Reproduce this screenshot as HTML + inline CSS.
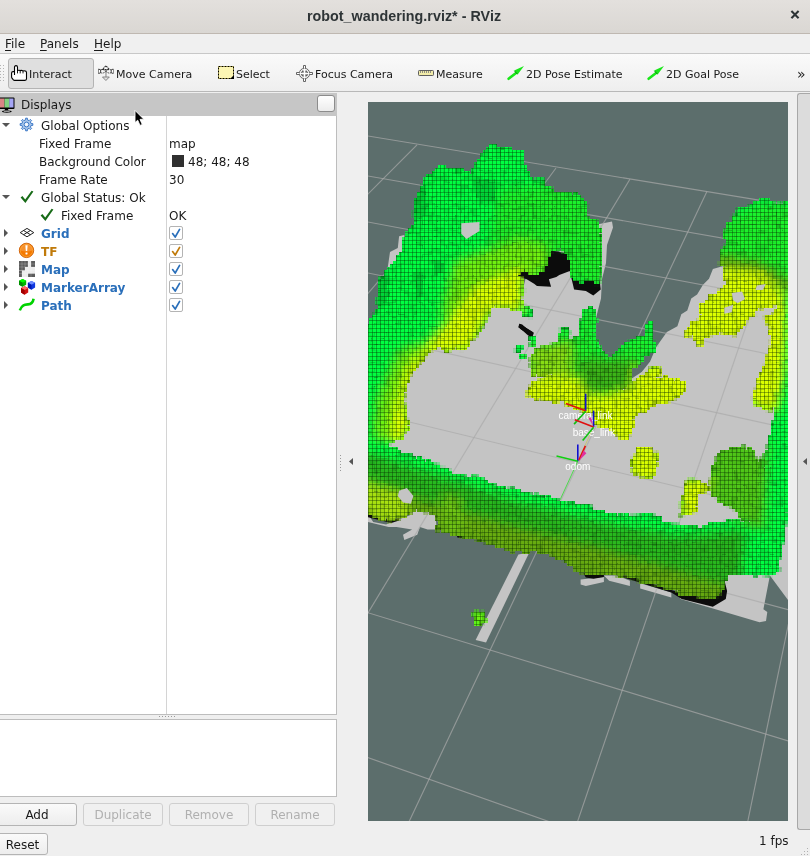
<!DOCTYPE html>
<html>
<head>
<meta charset="utf-8">
<title>robot_wandering.rviz* - RViz</title>
<style>
html,body{margin:0;padding:0;}
body{width:810px;height:856px;overflow:hidden;background:#efefef;font-family:"DejaVu Sans","Liberation Sans",sans-serif;font-size:12px;color:#1a1a1a;position:relative;}
.abs{position:absolute;will-change:transform;}
#titlebar{left:0;top:0;width:810px;height:33px;background:linear-gradient(#e3e0dd,#dad7d3);border-bottom:1px solid #bfb8b1;}
#title{left:0;top:0;width:808px;height:33px;line-height:32px;text-align:center;font-family:"Liberation Sans","DejaVu Sans",sans-serif;font-weight:bold;font-size:14.3px;color:#2e3436;letter-spacing:0.03px;}
#close{left:788px;top:6px;width:16px;height:20px;font-size:15px;line-height:20px;color:#2e3436;font-weight:bold;}
#menubar{left:0;top:34px;width:810px;height:19px;background:#f0f0f0;border-bottom:1px solid #c8c8c8;}
.menu{top:34px;height:20px;line-height:20px;font-size:12px;color:#1a1a1a;}
.menu u{text-decoration:underline;text-underline-offset:2px;}
#toolbar{left:0;top:54px;width:810px;height:37px;background:linear-gradient(#fafafa,#eeeeee);border-bottom:1px solid #b8b8b8;}
.tb{top:56px;height:37px;line-height:37px;font-size:11px;color:#1a1a1a;white-space:nowrap;}
#tb-active{left:8px;top:58px;width:86px;height:31px;border:1px solid #b4b4b4;border-radius:3px;background:#dfdfdf;box-sizing:border-box;}
#disp-head{left:0;top:93px;width:337px;height:23px;background:#c6c6c6;}
#disp-title{left:21px;top:95px;height:21px;line-height:21px;font-size:12px;}
#disp-btn{left:317px;top:95px;width:18px;height:17px;box-sizing:border-box;border:1px solid #8c8c8c;border-radius:3px;background:linear-gradient(#ffffff,#ececec);}
#tree{left:0;top:116px;width:336px;height:598px;background:#fff;border-right:1px solid #bdbdbd;border-bottom:1px solid #bdbdbd;}
#tree-div{left:166px;top:116px;width:1px;height:598px;background:#d4d4d4;}
.row{left:0;width:336px;height:18px;line-height:18px;font-size:12px;white-space:nowrap;}
.row span{position:absolute;top:1px;}
.b{font-weight:bold;}
.blue{color:#2a6fba;}
.org{color:#c07a0a;}
.cb{position:absolute;left:169px;top:2px;width:12px;height:12px;border:1px solid #b4b4b4;background:#fff;border-radius:2px;}
#desc{left:0;top:719px;width:337px;height:78px;background:#fff;border:1px solid #bdbdbd;border-left:none;box-sizing:border-box;}
.btn{top:803px;height:23px;box-sizing:border-box;border:1px solid #b4b4b4;border-radius:3px;background:linear-gradient(#fafafa,#ededed);text-align:center;line-height:23px;font-size:12px;color:#1a1a1a;}
.btn.dis{color:#b0b0b0;border-color:#cfcfcf;background:#f0f0f0;}
#view{left:368px;top:102px;width:420px;height:719px;background:#5c6e6c;overflow:hidden;}
#rpanel{left:797px;top:93px;width:14px;height:737px;background:#dcdcdc;border:1px solid #a8a8a8;border-right:none;border-radius:3px 0 0 3px;box-sizing:border-box;}
</style>
</head>
<body>
<div class="abs" id="titlebar"></div>
<div class="abs" id="title">robot_wandering.rviz* - RViz</div>


<div class="abs" id="menubar"></div>
<div class="abs menu" style="left:5px"><u>F</u>ile</div>
<div class="abs menu" style="left:40px"><u>P</u>anels</div>
<div class="abs menu" style="left:94px"><u>H</u>elp</div>

<div class="abs" id="toolbar"></div>
<div class="abs" id="tb-active"></div>
<div class="abs tb" style="left:29px">Interact</div>
<div class="abs tb" style="left:116px">Move Camera</div>
<div class="abs tb" style="left:236px">Select</div>
<div class="abs tb" style="left:315px">Focus Camera</div>
<div class="abs tb" style="left:436px">Measure</div>
<div class="abs tb" style="left:526px">2D Pose Estimate</div>
<div class="abs tb" style="left:666px">2D Goal Pose</div>
<div class="abs tb" style="left:797px;font-size:14px">»</div>

<div class="abs" id="disp-head"></div>
<div class="abs" id="disp-title">Displays</div>
<div class="abs" id="disp-btn"></div>

<div class="abs" id="tree"></div>
<div class="abs" id="tree-div"></div>

<div class="abs row" style="top:116px"><span style="left:41px">Global Options</span></div>
<div class="abs row" style="top:134px"><span style="left:39px">Fixed Frame</span><span style="left:169px">map</span></div>
<div class="abs row" style="top:152px"><span style="left:39px">Background Color</span><span style="left:172px;top:3px;width:12px;height:12px;background:#303030"></span><span style="left:188px">48; 48; 48</span></div>
<div class="abs row" style="top:170px"><span style="left:39px">Frame Rate</span><span style="left:169px">30</span></div>
<div class="abs row" style="top:188px"><span style="left:41px">Global Status: Ok</span></div>
<div class="abs row" style="top:206px"><span style="left:61px">Fixed Frame</span><span style="left:169px">OK</span></div>
<div class="abs row" style="top:224px"><span class="b blue" style="left:41px">Grid</span><div class="cb"></div></div>
<div class="abs row" style="top:242px"><span class="b org" style="left:41px">TF</span><div class="cb"></div></div>
<div class="abs row" style="top:260px"><span class="b blue" style="left:41px">Map</span><div class="cb"></div></div>
<div class="abs row" style="top:278px"><span class="b blue" style="left:41px">MarkerArray</span><div class="cb"></div></div>
<div class="abs row" style="top:296px"><span class="b blue" style="left:41px">Path</span><div class="cb"></div></div>

<div class="abs" id="desc"></div>
<div class="abs btn" style="left:-3px;width:80px">Add</div>
<div class="abs btn dis" style="left:83px;width:80px">Duplicate</div>
<div class="abs btn dis" style="left:169px;width:80px">Remove</div>
<div class="abs btn dis" style="left:255px;width:80px">Rename</div>
<div class="abs btn" style="left:-3px;top:833px;width:51px;height:22px;line-height:22px">Reset</div>
<div class="abs" style="left:759px;top:832px;height:18px;line-height:18px;font-size:12px">1 fps</div>

<div class="abs" id="view"><!--SCENE--><svg width="420" height="719" viewBox="368 102 420 719" style="position:absolute;left:0;top:0;display:block">
<defs>
<clipPath id="wc"><polygon points="358.0,432.0 358.0,322.0 368.0,324.4 378.4,308.9 378.4,280.4 388.7,270.0 401.7,251.9 404.3,238.9 414.7,223.3 414.7,205.2 423.7,181.9 438.0,167.6 463.9,170.2 471.7,176.1 471.7,172.8 482.1,155.9 489.9,146.1 513.2,149.4 522.3,153.3 523.6,163.7 533.9,181.9 540.4,178.0 546.9,185.7 554.7,192.2 578.0,194.8 583.3,199.8 587.3,207.7 585.3,217.5 596.1,221.5 600.1,229.4 600.7,257.0 599.3,283.7 588.9,279.3 584.4,279.3 580.0,282.2 574.1,276.3 571.1,270.4 569.6,255.6 559.3,248.1 550.4,251.9 544.4,267.4 537.0,274.8 529.6,271.9 525.2,268.9 517.8,274.8 522.2,279.3 523.7,289.6 520.7,300.0 519.3,308.9 492.4,306.3 489.9,312.0 482.1,327.6 471.7,340.5 461.3,350.9 453.6,347.0 445.8,353.5 440.6,345.7 428.9,350.9 423.7,360.0 417.3,363.9 406.9,384.6 403.0,397.6 406.9,415.7 408.2,428.7 399.1,439.0 383.6,441.6 373.2,433.9 368.0,428.7"/><polygon points="358.0,420.0 372.0,428.0 394.0,441.0 384.0,448.0 358.0,440.0"/><polygon points="358.0,512.0 358.0,436.0 368.0,438.9 383.6,444.1 401.7,451.9 412.1,455.7 425.0,460.9 445.8,468.7 453.6,475.2 476.9,477.8 482.1,479.1 489.9,484.3 513.2,489.4 533.9,494.6 554.7,499.8 578.0,505.0 591.0,505.6 593.6,510.7 611.7,514.6 629.9,515.9 650.6,514.6 661.0,518.5 663.6,523.7 681.7,525.0 702.4,527.6 712.8,523.7 733.6,521.1 754.3,522.4 759.5,510.7 763.4,484.8 767.3,458.9 771.1,435.6 775.0,420.0 795.8,420.0 795.8,495.2 788.0,497.8 785.4,523.7 781.5,549.6 777.6,567.8 780.2,570.4 772.4,573.0 769.9,575.6 728.4,573.0 723.2,585.9 719.3,593.7 712.8,598.9 697.3,596.3 681.7,593.7 673.9,589.8 658.4,585.9 632.4,578.1 629.9,575.6 616.9,575.6 603.9,573.0 585.8,574.3 578.0,570.4 567.6,563.3 554.7,555.6 533.9,550.4 528.7,553.0 502.8,547.8 479.5,540.0 458.7,536.1 438.0,529.6 436.7,514.1 413.4,508.9 409.5,514.1 399.1,518.0 391.3,520.6 368.0,514.1"/><polygon points="724.8,231.4 730.7,221.5 738.6,209.6 746.5,207.7 756.4,201.7 768.2,199.8 774.2,204.7 782.1,202.7 793.9,203.7 796.0,505.0 788.0,505.0 780.0,522.0 764.3,490.0 766.3,452.5 772.2,428.8 776.1,409.0 774.2,405.1 770.2,411.0 766.3,409.0 756.4,405.1 752.4,399.1 762.8,370.0 768.7,350.7 771.7,338.9 770.2,327.0 764.3,319.6 771.7,315.2 777.6,309.3 777.6,303.3 771.7,306.3 764.3,307.8 756.9,309.3 753.9,313.7 746.5,315.2 743.6,321.1 740.6,328.5 736.1,335.9 724.3,331.5 712.4,328.5 703.6,333.0 702.1,344.8 697.6,344.8 697.6,334.4 687.3,335.9 685.8,331.5 690.2,327.0 690.2,322.6 697.6,321.1 705.0,315.2 699.1,313.7 699.1,309.3 705.0,301.9 712.4,294.4 716.9,293.0 727.3,284.1 724.3,276.7 724.3,264.8 718.4,264.8 721.3,254.4 726.8,245.2"/><polygon points="712.8,469.3 718.0,453.7 728.4,449.8 743.9,445.9 743.9,453.7 749.1,448.5 754.3,449.8 754.3,456.3 759.5,461.5 764.7,453.7 766.0,497.8 759.5,523.7 743.9,519.8 733.6,508.1 723.2,503.0 712.8,495.2 710.2,482.2"/><polygon points="686.9,480.9 692.1,478.3 702.4,483.5 710.2,488.7 697.3,493.9 694.7,512.0 681.7,515.9 680.4,504.3 684.3,493.9"/><polygon points="632.4,458.9 641.5,455.0 641.5,447.2 649.3,448.5 649.3,455.0 655.8,458.9 655.8,468.0 650.6,478.3 632.4,473.1"/><polygon points="528.4,390.7 535.7,380.2 547.3,378.1 555.7,371.9 572.5,371.9 585.1,378.1 589.3,394.9 604.0,392.8 624.9,390.7 633.3,382.3 645.9,374.0 651.2,367.7 660.6,367.7 660.6,374.0 654.3,378.1 664.8,378.1 684.8,382.3 684.8,390.7 675.3,399.1 664.8,403.3 654.3,404.4 641.7,411.7 633.3,415.9 633.3,426.4 627.0,439.0 620.7,436.9 610.2,428.5 594.5,424.3 593.5,411.7 585.1,410.7 565.1,404.4 565.1,399.1 554.6,401.2 536.8,399.1 528.4,396.0"/><polygon points="531.5,359.3 536.8,348.8 545.2,346.7 559.9,342.5 559.9,329.9 567.2,327.8 569.3,338.3 579.8,337.2 579.8,323.6 583.0,319.4 583.0,311.0 589.3,307.8 595.6,311.0 596.6,321.5 593.5,332.0 595.6,340.4 604.0,353.0 610.2,357.2 618.6,350.9 627.0,342.5 633.3,340.4 639.6,336.2 645.9,338.3 647.0,323.6 651.2,322.5 653.3,332.0 651.2,342.5 655.4,343.5 654.3,350.9 643.8,355.1 637.5,363.5 631.2,367.7 631.2,382.3 624.9,388.6 612.3,392.8 599.8,394.9 587.2,392.8 583.0,382.3 572.5,374.0 562.0,371.9 551.5,374.0 543.1,376.0 532.6,374.0 530.5,365.6"/><polygon points="520.0,302.6 530.5,308.9 531.5,315.2 524.2,313.1 520.0,308.9"/><polygon points="530.5,339.3 535.7,340.4 534.7,344.6 530.5,344.1"/><polygon points="637.5,447.4 645.9,446.4 654.3,451.6 658.5,460.0 634.4,460.0"/><polygon points="685.6,331.4 692.1,322.4 702.4,317.2 723.2,312.0 759.5,312.0 749.1,317.2 743.9,325.0 733.6,335.3 718.0,332.7 702.4,337.9 699.9,345.7 692.1,335.3"/><polygon points="515.8,347.0 521.0,348.3 521.0,352.2 515.8,350.9"/><polygon points="519.7,353.5 524.9,354.8 524.9,358.7 519.7,358.1"/><polygon points="530.0,337.9 535.2,339.2 535.2,344.4 530.0,343.1"/><polygon points="522.3,309.4 532.6,309.4 531.3,317.2 523.6,315.9"/><polygon points="474.3,612.7 484.7,611.4 484.7,623.1 474.3,624.4"/></clipPath>
<filter id="bl" color-interpolation-filters="sRGB" filterUnits="userSpaceOnUse" x="300" y="40" width="560" height="860"><feGaussianBlur stdDeviation="5"/></filter>
<pattern id="vx" width="3.6" height="3.6" patternUnits="userSpaceOnUse" patternTransform="rotate(24) skewX(-12)"><path d="M0 0.4H3.6M0.4 0V3.6" stroke="#0a3000" stroke-opacity="0.22" stroke-width="0.8"/><rect x="0" y="0" width="1.5" height="1.3" fill="#062400" fill-opacity="0.62"/></pattern>
<filter id="rg" color-interpolation-filters="sRGB" filterUnits="userSpaceOnUse" x="360" y="95" width="440" height="735"><feTurbulence type="fractalNoise" baseFrequency="0.2" numOctaves="1" seed="7" result="t"/><feDisplacementMap in="SourceGraphic" in2="t" scale="6" xChannelSelector="R" yChannelSelector="G"/></filter>
<filter id="px" filterUnits="userSpaceOnUse" x="360" y="96" width="440" height="732" color-interpolation-filters="sRGB"><feFlood x="361.3" y="97.3" height="1.4" width="1.4"/><feComposite width="4" height="4"/><feTile result="a"/><feComposite in="SourceGraphic" in2="a" operator="in"/><feMorphology operator="dilate" radius="2" result="pix"/><feFlood flood-color="#042800" flood-opacity="0.2" x="360" y="96" width="4" height="1"/><feComposite width="4" height="4"/><feTile result="gh"/><feFlood flood-color="#042800" flood-opacity="0.2" x="360" y="96" width="1" height="4"/><feComposite width="4" height="4"/><feTile result="gv"/><feComposite in="gh" in2="pix" operator="atop" result="p1"/><feComposite in="gv" in2="p1" operator="atop"/></filter>
<filter id="nz" filterUnits="userSpaceOnUse" x="360" y="96" width="440" height="732" color-interpolation-filters="sRGB"><feTurbulence type="fractalNoise" baseFrequency="0.43" numOctaves="1" seed="11"/><feColorMatrix type="matrix" values="0 0 0 0 0  0 0 0 0 0.16  0 0 0 0 0  1.1 0 0 0 -0.46"/></filter>
</defs>
<rect x="368" y="102" width="420" height="719" fill="#5c6e6c"/>
<polygon points="492.0,306.0 518.0,309.0 528.0,269.0 567.5,247.0 597.0,224.4 612.0,221.5 613.0,227.4 607.0,245.0 606.0,263.0 602.0,279.0 601.0,298.5 596.0,318.0 594.5,336.2 604.0,353.0 629.1,380.2 641.7,371.9 650.1,361.4 656.4,346.7 666.9,332.0 677.4,326.2 681.3,314.3 687.3,310.4 691.2,298.5 697.1,294.6 703.0,284.7 709.0,278.8 712.9,268.9 726.8,265.0 788.0,280.0 788.0,600.0 769.9,575.6 763.4,609.3 767.3,611.9 766.0,620.9 759.5,622.2 680.4,598.9 676.0,588.0 578.0,558.0 368.0,503.0 368.0,428.0 395.0,430.0 398.0,398.0 412.0,362.0 425.0,344.0 458.0,342.0 485.0,304.0" fill="#c4c4c4"/>
<polygon points="368.0,514.1 373.2,521.9 386.1,524.4 391.3,521.9 399.1,519.3 409.5,515.4 413.4,510.2 435.4,514.1 436.7,529.6 427.6,529.6 419.9,527.0 417.3,534.8 404.3,540.0 403.0,534.8 412.1,529.6 396.5,527.0 388.7,527.0 368.0,521.9" fill="#c4c4c4"/>
<polygon points="518.4,554.4 529.3,552.6 486.0,642.6 475.6,640.0" fill="#c4c4c4"/>
<polygon points="580.6,579.4 603.9,576.9 603.9,582.0 585.8,585.9 580.6,584.6" fill="#c4c4c4"/>
<polygon points="603.9,575.6 616.9,575.6 629.9,580.7 629.9,585.9 609.1,580.7" fill="#c4c4c4"/>
<polygon points="640.2,583.3 671.3,592.4 671.3,597.6 640.2,588.5" fill="#c4c4c4"/>
<polygon points="387.4,270.0 390.0,251.9 397.8,248.0 399.1,236.3 404.3,235.0 404.3,244.1 401.7,254.4 393.9,264.8" fill="#c4c4c4"/>
<polygon points="461.3,223.3 479.5,222.0 479.5,231.1 466.5,238.9 461.3,233.7" fill="#c4c4c4"/>
<g stroke="#a9aaaa" stroke-opacity="0.7" stroke-width="1.15" fill="none">
<line x1="360.0" y1="134.7" x2="800.0" y2="206.9"/>
<line x1="360.0" y1="174.6" x2="800.0" y2="251.7"/>
<line x1="360.0" y1="220.5" x2="800.0" y2="303.2"/>
<line x1="360.0" y1="271.4" x2="800.0" y2="360.4"/>
<line x1="360.0" y1="334.2" x2="800.0" y2="431.0"/>
<line x1="360.0" y1="410.1" x2="800.0" y2="516.2"/>
<line x1="360.0" y1="494.9" x2="800.0" y2="612.8"/>
<line x1="360.0" y1="610.3" x2="800.0" y2="744.5"/>
<line x1="360.0" y1="754.7" x2="800.0" y2="910.4"/>
<line x1="360.0" y1="936.8" x2="800.0" y2="1112.8"/>
<line x1="349.0" y1="133.0" x2="-441.3" y2="830.0"/>
<line x1="417.0" y1="144.8" x2="-266.1" y2="830.0"/>
<line x1="487.0" y1="155.5" x2="-95.6" y2="830.0"/>
<line x1="556.0" y1="168.0" x2="69.7" y2="830.0"/>
<line x1="629.9" y1="179.3" x2="236.9" y2="830.0"/>
<line x1="706.9" y1="191.4" x2="405.1" y2="830.0"/>
<line x1="787.6" y1="204.0" x2="574.7" y2="830.0"/>
<line x1="793.4" y1="600.0" x2="746.0" y2="830.0"/>
</g>
<polygon points="517.8,276.3 525.2,267.4 550.4,250.4 571.1,254.1 571.1,270.4 559.3,275.1 556.3,277.0 548.9,279.3 551.1,286.7 537.0,285.9 534.1,283.7 526.7,279.3" fill="#0c0c0c"/>
<polygon points="569.6,270.4 599.3,276.3 600.7,289.6 593.3,295.6 585.9,291.1 574.1,289.6" fill="#0c0c0c"/>
<polygon points="519.3,323.7 522.2,324.4 532.6,334.1 531.9,337.0 528.1,335.6 518.5,326.7" fill="#0c0c0c"/>
<polygon points="520.0,324.6 532.6,332.0 531.5,336.2 520.0,328.8" fill="#0c0c0c"/>
<polygon points="519.7,323.7 533.9,332.7 532.6,336.6 518.4,327.6" fill="#0c0c0c"/>
<polygon points="368.0,514.1 391.3,520.6 399.1,518.0 399.1,520.6 391.3,523.1 368.0,517.2" fill="#0c0c0c"/>
<polygon points="583.2,573.0 603.9,573.0 603.9,576.9 593.6,578.7 585.8,577.6" fill="#0c0c0c"/>
<polygon points="616.9,575.6 629.9,575.6 658.4,585.9 681.7,593.2 712.8,598.9 719.3,593.7 723.2,575.6 727.1,591.1 725.8,598.9 712.8,606.7 681.7,598.9 671.3,592.4 632.4,580.2" fill="#0c0c0c"/>
<polygon points="456.1,533.5 462.6,534.8 461.9,537.9 457.4,537.4" fill="#0c0c0c"/>
<g filter="url(#px)">
<g filter="url(#rg)">
<g clip-path="url(#wc)">
<g filter="url(#bl)">
<polygon points="300.0,40.0 860.0,40.0 860.0,900.0 300.0,900.0" fill="#00ff42"/>
<polygon points="500.0,190.0 560.0,185.0 610.0,215.0 610.0,290.0 560.0,275.0 520.0,270.0 490.0,240.0" fill="#1cf02a"/>
<polygon points="455.0,262.0 520.0,238.0 548.0,246.0 548.0,268.0 515.0,290.0 470.0,300.0 440.0,320.0" fill="#70f010"/>
<polygon points="476.0,286.0 522.0,266.0 524.0,312.0 492.0,310.0 470.0,352.0 436.0,354.0 430.0,340.0 454.0,312.0" fill="#dcff00"/>
<polygon points="430.0,340.0 436.0,354.0 406.0,398.0 412.0,430.0 398.0,444.0 389.0,440.0 395.0,400.0 406.0,368.0" fill="#dcff00"/>
<polygon points="398.0,352.0 426.0,340.0 406.0,368.0 395.0,400.0 389.0,440.0 373.0,438.0 377.0,400.0" fill="#70f010"/>
<polygon points="360.0,450.0 520.0,502.0 600.0,522.0 680.0,536.0 745.0,530.0 740.0,600.0 680.0,600.0 600.0,580.0 520.0,560.0 360.0,522.0" fill="#28b81e"/>
<polygon points="360.0,482.0 520.0,528.0 600.0,548.0 680.0,572.0 735.0,588.0 730.0,615.0 600.0,590.0 520.0,565.0 360.0,528.0" fill="#68ac10"/>
<polygon points="360.0,480.0 405.0,492.0 412.0,522.0 360.0,522.0" fill="#a8e010"/>
<polygon points="442.0,492.0 462.0,498.0 462.0,536.0 442.0,530.0" fill="#70c414"/>
<polygon points="715.0,225.0 760.0,205.0 800.0,205.0 800.0,290.0 760.0,268.0 715.0,258.0" fill="#1cf02a"/>
<polygon points="715.0,254.0 760.0,262.0 800.0,286.0 800.0,300.0 760.0,276.0 715.0,266.0" fill="#68ac10"/>
<polygon points="680.0,264.0 760.0,272.0 786.0,296.0 786.0,345.0 783.0,380.0 777.0,409.0 770.0,416.0 750.0,404.0 735.0,375.0 680.0,350.0" fill="#dcff00"/>
<polygon points="787.0,292.0 795.0,292.0 795.0,530.0 762.0,530.0 765.0,470.0 768.0,452.0 774.0,429.0 778.0,409.0 784.0,380.0 787.0,345.0" fill="#00ff42"/>
<polygon points="706.0,440.0 768.0,440.0 764.0,530.0 706.0,508.0" fill="#50c818"/>
<polygon points="680.0,478.0 712.0,478.0 705.0,520.0 680.0,520.0" fill="#dcff00"/>
<polygon points="628.0,446.0 662.0,446.0 662.0,482.0 628.0,482.0" fill="#dcff00"/>
<polygon points="515.8,374.0 696.3,361.4 696.3,449.5 515.8,449.5" fill="#dcff00"/>
<polygon points="528.4,390.7 535.7,380.2 547.3,378.1 555.7,371.9 572.5,371.9 585.1,378.1 589.3,394.9 604.0,392.8 624.9,390.7 633.3,382.3 645.9,374.0 651.2,367.7 660.6,367.7 660.6,374.0 654.3,378.1 664.8,378.1 684.8,382.3 684.8,390.7 675.3,399.1 664.8,403.3 654.3,404.4 641.7,411.7 633.3,415.9 633.3,426.4 627.0,439.0 620.7,436.9 610.2,428.5 594.5,424.3 593.5,411.7 585.1,410.7 565.1,404.4 565.1,399.1 554.6,401.2 536.8,399.1 528.4,396.0" fill="#dcff00"/>
<polygon points="531.5,359.3 536.8,348.8 545.2,346.7 559.9,342.5 559.9,329.9 567.2,327.8 569.3,338.3 579.8,337.2 579.8,323.6 583.0,319.4 583.0,311.0 589.3,307.8 595.6,311.0 596.6,321.5 593.5,332.0 595.6,340.4 604.0,353.0 610.2,357.2 618.6,350.9 627.0,342.5 633.3,340.4 639.6,336.2 645.9,338.3 647.0,323.6 651.2,322.5 653.3,332.0 651.2,342.5 655.4,343.5 654.3,350.9 643.8,355.1 637.5,363.5 631.2,367.7 631.2,382.3 624.9,388.6 612.3,392.8 599.8,394.9 587.2,392.8 583.0,382.3 572.5,374.0 562.0,371.9 551.5,374.0 543.1,376.0 532.6,374.0 530.5,365.6" fill="#1cf02a"/>
<polygon points="528.4,346.7 572.5,340.4 572.5,376.0 528.4,378.1" fill="#88dc14"/>
<polygon points="574.6,359.3 633.3,359.3 631.2,388.6 585.1,392.8" fill="#3cb418"/>
<polygon points="675.0,305.0 760.0,305.0 745.0,350.0 675.0,350.0" fill="#dcff00"/>
<polygon points="470.0,608.0 490.0,608.0 490.0,630.0 470.0,630.0" fill="#70f010"/>
</g>
<polygon points="471.7,176.1 496.3,179.3 496.3,203.9 475.6,201.3" fill="#003c10" fill-opacity="0.22"/>
<polygon points="414.7,205.2 423.7,181.9 427.1,183.1 427.1,215.6 416.0,223.3" fill="#003c10" fill-opacity="0.22"/>
<polygon points="378.4,280.4 388.7,271.3 390.0,295.9 379.7,308.9" fill="#003c10" fill-opacity="0.22"/>
<polygon points="413.4,271.3 423.7,270.0 423.7,298.5 414.7,299.8" fill="#003c10" fill-opacity="0.22"/>
<polygon points="432.8,259.6 443.2,258.3 443.2,275.2 434.1,277.8" fill="#003c10" fill-opacity="0.22"/>
<rect x="360" y="96" width="440" height="732" filter="url(#nz)"/>
</g>
</g>
</g>
<polygon points="399.1,490.7 406.9,488.1 413.4,495.9 410.8,503.7 403.0,502.4 397.8,495.9" fill="#c4c4c4"/>
<polygon points="461.3,223.3 479.5,222.0 479.5,231.1 466.5,238.9 461.3,233.7" fill="#c4c4c4"/>
<polygon points="731.7,293.0 742.1,291.5 745.0,298.9 737.6,303.3 733.2,300.4" fill="#c4c4c4"/>
<polygon points="724.3,307.8 733.2,304.8 731.7,312.2 724.3,313.7" fill="#c4c4c4"/>
<polygon points="756.9,285.6 765.8,284.1 762.8,290.0 755.4,290.0" fill="#c4c4c4"/>
<line x1="577.8" y1="461.2" x2="560.0" y2="500.0" stroke="#30e030" stroke-width="0.8"/>
<line x1="585.7" y1="411.0" x2="593.6" y2="426.9" stroke="#c8c840" stroke-width="0.6"/>
<line x1="593.6" y1="426.9" x2="577.8" y2="461.2" stroke="#c8c840" stroke-width="0.6"/>
<g font-family="Liberation Sans, Arial, sans-serif" font-size="10" fill="#ffffff" text-anchor="middle">
<text x="585.5" y="419">camera_link</text><text x="593.8" y="435.5">base_link</text><text x="577.8" y="469.5">odom</text>
</g>
<line x1="585.7" y1="393.6" x2="585.7" y2="411.0" stroke="#1010d0" stroke-width="1.6"/>
<line x1="566.0" y1="403.4" x2="585.7" y2="410.7" stroke="#e01010" stroke-width="1.6"/>
<line x1="585.7" y1="411.2" x2="574.1" y2="424.1" stroke="#10c010" stroke-width="1.6"/>
<line x1="593.6" y1="410.6" x2="593.6" y2="426.9" stroke="#1010d0" stroke-width="1.6"/>
<line x1="574.8" y1="419.7" x2="593.6" y2="426.9" stroke="#e01010" stroke-width="1.6"/>
<line x1="593.6" y1="427.3" x2="582.7" y2="440.4" stroke="#10c010" stroke-width="1.6"/>
<line x1="577.8" y1="444.5" x2="577.8" y2="461.2" stroke="#1010d0" stroke-width="1.6"/>
<line x1="556.5" y1="456.0" x2="577.8" y2="461.2" stroke="#10d010" stroke-width="1.6"/>
<line x1="585.4" y1="445.9" x2="578.9" y2="460.1" stroke="#e01010" stroke-width="1.6"/>
<polygon points="583.6,450.6 586.4,453.3 579.2,460.4" fill="#e030a0"/>
<polygon points="588.4,418.0 591.1,417.3 593.1,425.5" fill="#e030a0"/>
</svg><!--/SCENE--></div>
<div class="abs" id="rpanel"></div>
<!--ICONS--><svg width="810" height="856" viewBox="0 0 810 856" style="position:absolute;left:0;top:0;pointer-events:none">
<!-- close x --><path d="M791.4 11.9L798.6 19.1M798.6 11.9L791.4 19.1" stroke="#ffffff" stroke-opacity="0.7" stroke-width="2"/><path d="M791.4 11.1L798.6 18.3M798.6 11.1L791.4 18.3" stroke="#2e3436" stroke-width="2.1"/>
<!-- toolbar grip -->
<g fill="#b4b4b4"><rect x="0" y="65" width="1" height="1"/><rect x="3" y="65" width="1" height="1"/><rect x="0" y="68" width="1" height="1"/><rect x="3" y="68" width="1" height="1"/><rect x="0" y="71" width="1" height="1"/><rect x="3" y="71" width="1" height="1"/><rect x="0" y="74" width="1" height="1"/><rect x="3" y="74" width="1" height="1"/><rect x="0" y="77" width="1" height="1"/><rect x="3" y="77" width="1" height="1"/><rect x="0" y="80" width="1" height="1"/><rect x="3" y="80" width="1" height="1"/></g>
<!-- hand -->
<g transform="translate(11,65)"><path d="M3.5 10V2.3Q3.5 0.6 5 0.6Q6.5 0.6 6.5 2.3V5.6Q7.8 4.9 9.2 5.6Q10.6 5 12 5.9Q13.6 5.4 15 6.3Q15.5 6.8 15.5 7.8V13.8Q15.5 15.4 14 15.4H3.6Q2.8 15.4 2.2 14.7L1 13.2Q0.6 12.6 0.6 11.8V8Q0.6 6.6 2 6.6H3.5" fill="#fff" stroke="#000" stroke-width="1.1" stroke-linejoin="round"/><path d="M6.5 5.6V8.4M9.2 5.8V8.4M12 6V8.4" stroke="#000" stroke-width="0.9" fill="none"/></g>
<!-- move camera -->
<g transform="translate(98,65)" fill="none"><rect x="7" y="4.4" width="1.9" height="7.8" fill="#b8b8b8"/><path d="M7.9 0.8L4.5 4.4H11.3Z" fill="#fdfdfd" stroke="#333" stroke-width="1.05" stroke-dasharray="1.9 0.5"/><path d="M7.9 15.5L4.5 12H11.3Z" fill="#e2e2e2" stroke="#7a7a7a" stroke-width="0.9"/><path d="M0.7 3.9V8.7M15.1 3.9V8.7" stroke="#333" stroke-width="1"/><path d="M0.7 4.2L2.6 4.8L2.6 7.8L0.7 8.4M15.1 4.2L13.2 4.8V7.8L15.1 8.4" stroke="#333" stroke-width="0.9" fill="#fff"/><path d="M2.6 5C4.4 3.9 6 4.6 7.9 6.3S11.4 8.7 13.2 7.6M2.6 7.6C4.4 8.7 6 8 7.9 6.3S11.4 3.9 13.2 5" stroke="#333" stroke-width="0.9" stroke-dasharray="1.3 0.8"/></g>
<!-- select -->
<rect x="218.5" y="66.5" width="15" height="12" fill="#fcf6b4" stroke="#fff27a" stroke-width="1"/>
<rect x="218.5" y="66.5" width="15" height="12" fill="none" stroke="#000" stroke-width="1" stroke-dasharray="2 1"/>
<path d="M234 75V79H230Z" fill="#000"/>
<!-- focus camera -->
<g transform="translate(304.5,73.5)" fill="none" stroke="#555" stroke-width="0.9"><circle r="5.2"/><circle r="3.2" stroke-dasharray="1.2 0.8" stroke="#444"/><path d="M-1 -5V-8H1V-5M-1 5V8H1V5M-5 -1H-8V1H-5M5 -1H8V1H5" fill="#fff"/><path d="M0 -4.5V4.5M-4.5 0H4.5" stroke="#fff" stroke-width="1"/><path d="M-2.8 -1.6H-0.8M0.8 -1.6H2.8M-2.8 1.6H-0.8M0.8 1.6H2.8" stroke="#444" stroke-width="1.4"/></g>
<!-- measure -->
<rect x="418.5" y="70.5" width="15" height="5" rx="0.8" fill="#f1eba9" stroke="#5e5e5e" stroke-width="1"/>
<path d="M420.5 71V73M422.5 71V73M424.5 71V73M426.5 71V73M428.5 71V73M430.5 71V73" stroke="#777" stroke-width="0.8"/>
<!-- arrows -->
<g><path d="M508.6 78.8L516.4 72.8" stroke="#19e619" stroke-width="2.6" stroke-linecap="round"/><path d="M514.2 70.4L524 66L517.6 74.6Z" fill="#19e619"/><path d="M514.4 70.8L517.4 74.2" stroke="#0a8c0a" stroke-width="1"/></g>
<g transform="translate(140,0)"><path d="M508.6 78.8L516.4 72.8" stroke="#19e619" stroke-width="2.6" stroke-linecap="round"/><path d="M514.2 70.4L524 66L517.6 74.6Z" fill="#19e619"/><path d="M514.4 70.8L517.4 74.2" stroke="#0a8c0a" stroke-width="1"/></g>
<!-- displays monitor icon -->
<g><rect x="-1.5" y="97.5" width="16" height="11.4" rx="1" fill="#000"/><rect x="-0.5" y="98.5" width="5" height="9" fill="#d98585"/><rect x="4.5" y="98.5" width="5" height="9" fill="#7fd07f"/><rect x="9.3" y="98.5" width="4.2" height="9" fill="#a5a5f5"/><path d="M5 108.9H8L8.6 110.5H4.4Z" fill="#000"/><ellipse cx="6.8" cy="111.6" rx="4.8" ry="1.1" fill="#000"/><ellipse cx="6.8" cy="111.3" rx="3.4" ry="0.5" fill="#c6c6c6"/></g>
<!-- cursor -->
<path d="M135 110.4V122.6L137.7 120.2L140 125.4L142.3 124.5L140 119.4L143.8 119.2Z" fill="#000" stroke="#fff" stroke-width="0.9" stroke-linejoin="miter"/>
<!-- tree expand arrows -->
<g fill="#555"><path d="M2 123H10L6 127Z"/><path d="M2 195H10L6 199Z"/>
<path d="M4 229L8 233L4 237Z"/><path d="M4 247L8 251L4 255Z"/><path d="M4 265L8 269L4 273Z"/><path d="M4 283L8 287L4 291Z"/><path d="M4 301L8 305L4 309Z"/></g>
<!-- gear -->
<g transform="translate(26.5,124.5)"><path d="M-0.90 -4.61L-0.89 -6.34L0.89 -6.34L0.90 -4.61L2.63 -3.90L3.85 -5.11L5.11 -3.85L3.90 -2.63L4.61 -0.90L6.34 -0.89L6.34 0.89L4.61 0.90L3.90 2.63L5.11 3.85L3.85 5.11L2.63 3.90L0.90 4.61L0.89 6.34L-0.89 6.34L-0.90 4.61L-2.63 3.90L-3.85 5.11L-5.11 3.85L-3.90 2.63L-4.61 0.90L-6.34 0.89L-6.34 -0.89L-4.61 -0.90L-3.90 -2.63L-5.11 -3.85L-3.85 -5.11L-2.63 -3.90Z" fill="#a9c6ea" stroke="#2d6dc2" stroke-width="0.9" stroke-linejoin="round"/><circle r="2.4" fill="#e4edf8" stroke="#2d6dc2" stroke-width="0.9"/><circle r="1" fill="#fff"/></g>
<!-- status checks -->
<path d="M20.6 197.4L22.4 196L25.2 199.6L31.6 190.8L33.4 191.6L25.4 203Z" fill="#176b17"/>
<path d="M40.6 215.4L42.4 214L45.2 217.6L51.6 208.8L53.4 209.6L45.4 221Z" fill="#176b17"/>
<!-- grid icon -->
<g fill="none" stroke="#222" stroke-width="1"><path d="M27 228.4L33.8 232.6L27 236.8L20.2 232.6Z"/><path d="M23.6 230.5L30.4 234.7M30.4 230.5L23.6 234.7"/></g>
<!-- TF warning -->
<g><circle cx="26.5" cy="250.4" r="7.2" fill="#f57900" stroke="#ce5c00" stroke-width="0.9"/><circle cx="26.5" cy="250.4" r="6.2" fill="none" stroke="#fcaf3e" stroke-width="0.8" stroke-opacity="0.8"/><path d="M20.4 250.4A6.1 6.1 0 0 1 32.6 250.4Q26.5 252.6 20.4 250.4Z" fill="#fff" fill-opacity="0.18"/><path d="M25.4 245.2H27.6L27.2 251H25.8Z" fill="#fff"/><rect x="25.5" y="252.4" width="2" height="2" rx="0.4" fill="#fff"/></g>
<!-- map icon -->
<g><rect x="19" y="261" width="16" height="16" fill="#ececec"/><g fill="#5c5c5c"><rect x="19" y="261" width="9" height="6"/><rect x="31" y="261" width="4" height="6"/><rect x="19" y="267" width="6" height="3.4"/><rect x="19" y="270.4" width="3" height="6.6"/><rect x="28" y="273.6" width="7" height="3.4"/></g><path d="M22 261V277M25 261V277M28 261V277M31 261V277M19 264H35M19 267H35M19 270.4H35M19 273.6H35" stroke="#fff" stroke-opacity="0.35" stroke-width="0.6"/></g>
<!-- marker array cubes -->
<g><path d="M22.6 279L26.2 280.8V284.8L22.6 286.8L19 284.8V280.8Z" fill="#00b400"/><path d="M22.6 279L26.2 280.8L22.6 282.8L19 280.8Z" fill="#00ff00"/><path d="M22.6 282.8V286.8L19 284.8V280.8Z" fill="#008c00"/>
<path d="M31.5 281L35.1 282.8V287.4L31.5 289.8L27.9 287.4V282.8Z" fill="#1038e0"/><path d="M31.5 281L35.1 282.8L31.5 284.8L27.9 282.8Z" fill="#6c8cff"/><path d="M31.5 284.8V289.8L27.9 287.4V282.8Z" fill="#0018b0"/>
<path d="M24.6 286.2L28.2 288V292.4L24.6 294.8L21 292.4V288Z" fill="#d01010"/><path d="M24.6 286.2L28.2 288L24.6 290L21 288Z" fill="#ff6868"/><path d="M24.6 290V294.8L21 292.4V288Z" fill="#a00000"/></g>
<!-- path icon -->
<path d="M19.8 310.4C22 304.6 25 304.6 28 304.4S33 302.6 33.6 298.8" fill="none" stroke="#00d200" stroke-width="2.6" stroke-linecap="butt"/>
<!-- checkbox checks -->
<g fill="none" stroke-width="1.7" stroke-linecap="round" stroke-linejoin="round"><path d="M172.6 233.6L175.2 237L179.6 229.4" stroke="#2a6fba"/><path d="M172.6 251.6L175.2 255L179.6 247.4" stroke="#c07a0a"/><path d="M172.6 269.6L175.2 273L179.6 265.4" stroke="#2a6fba"/><path d="M172.6 287.6L175.2 291L179.6 283.4" stroke="#2a6fba"/><path d="M172.6 305.6L175.2 309L179.6 301.4" stroke="#2a6fba"/></g>
<!-- splitter dots -->
<g fill="#9a9a9a"><rect x="159" y="716" width="1" height="1"/><rect x="162" y="716" width="1" height="1"/><rect x="165" y="716" width="1" height="1"/><rect x="168" y="716" width="1" height="1"/><rect x="171" y="716" width="1" height="1"/><rect x="174" y="716" width="1" height="1"/></g>
<!-- vsplit --><g fill="#9a9a9a"><rect x="340" y="455" width="1" height="1"/><rect x="340" y="458" width="1" height="1"/><rect x="340" y="461" width="1" height="1"/><rect x="340" y="464" width="1" height="1"/><rect x="340" y="467" width="1" height="1"/><rect x="340" y="470" width="1" height="1"/></g>
<!-- collapse arrows -->
<path d="M353 458V465L349 461.5Z" fill="#555"/><path d="M807 458V465L803 461.5Z" fill="#555"/>
<!-- resize grip -->
<g fill="#b0b0b0"><rect x="807" y="848" width="1" height="1"/><rect x="804" y="851" width="1" height="1"/><rect x="807" y="851" width="1" height="1"/><rect x="801" y="854" width="1" height="1"/><rect x="804" y="854" width="1" height="1"/><rect x="807" y="854" width="1" height="1"/></g>
</svg>
<!--/ICONS-->
</body>
</html>
